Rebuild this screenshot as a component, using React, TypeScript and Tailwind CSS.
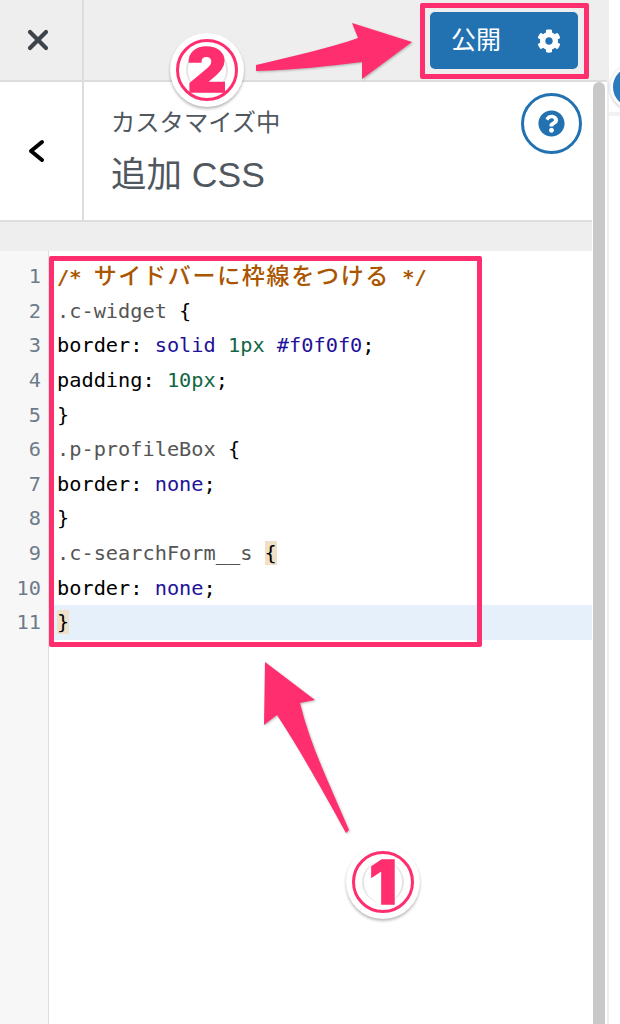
import React from 'react';
import { FaCog, FaQuestionCircle } from 'react-icons/fa';

const PINK = '#ff2e6e';

type Token = { t: string; c?: string };

const lines: Token[][] = [
  [{ t: '/* ', c: 'text-[#aa5500] font-bold' }, { t: 'サイドバーに枠線をつける', c: 'text-[#aa5500] text-[23px] font-medium tracking-[1.7px]' }, { t: ' */', c: 'text-[#aa5500] font-bold' }],
  [{ t: '.c-widget', c: 'text-[#555555]' }, { t: ' {' }],
  [{ t: 'border: ' }, { t: 'solid', c: 'text-[#221199]' }, { t: ' ' }, { t: '1px', c: 'text-[#116644]' }, { t: ' ' }, { t: '#f0f0f0', c: 'text-[#221199]' }, { t: ';' }],
  [{ t: 'padding: ' }, { t: '10px', c: 'text-[#116644]' }, { t: ';' }],
  [{ t: '}' }],
  [{ t: '.p-profileBox', c: 'text-[#555555]' }, { t: ' {' }],
  [{ t: 'border: ' }, { t: 'none', c: 'text-[#221199]' }, { t: ';' }],
  [{ t: '}' }],
  [{ t: '.c-searchForm__s', c: 'text-[#555555]' }, { t: ' ' }, { t: '{', c: 'bg-[#f0e0c8]' }],
  [{ t: 'border: ' }, { t: 'none', c: 'text-[#221199]' }, { t: ';' }],
  [{ t: '}', c: 'bg-[#f0e0c8]' }],
];

function Badge({ n, className }: { n: string; className: string }) {
  return (
    <div className={`absolute flex h-[74px] w-[74px] items-center justify-center rounded-full bg-white shadow-[0_2px_3px_rgba(0,0,0,0.28)] ${className}`}>
      <div className="relative flex h-[62px] w-[62px] items-center justify-center rounded-full border-[3px] border-[#ff2e6e] font-['Inter',sans-serif] text-[61px] leading-none font-black text-[#ff2e6e]">
        <div className="absolute left-[7px] top-[7px] h-[42px] w-[42px] rounded-full border-x-2 border-x-[#e4e4e4] border-y-0" />
        <span className="relative [-webkit-text-stroke:1.5px_#ff2e6e]">{n}</span>
      </div>
    </div>
  );
}

export default function App() {
  return (
    <div className="relative flex h-[1024px] w-[620px] overflow-hidden bg-white font-['Liberation_Sans','Noto_Sans_CJK_JP',sans-serif]">
      <div className="flex w-[607px] flex-col">
        {/* top bar */}
        <div className="flex h-[82px] items-start border-b-2 border-[#dddddd] bg-[#eeeeee]">
          <div className="flex h-full w-[84px] items-center justify-center border-r-2 border-[#dddddd] pr-[7px]">
            <svg width="22" height="22" viewBox="0 0 22 22" fill="none" stroke="#3c434a" strokeWidth="4.2" strokeLinecap="round">
              <path d="M3 3L19 19M19 3L3 19" />
            </svg>
          </div>
          <div className="ml-auto mr-[29px] mt-[12px] flex h-[57px] w-[148px] items-center rounded-[5px] bg-[#2271b1] pl-[21px] pr-[17px] text-white">
            <span className="text-[25px] leading-none">公開</span>
            <FaCog className="ml-auto h-[24px] w-[24px]" />
          </div>
        </div>

        <div className="flex min-h-0 flex-1">
          <div className="flex w-[592px] flex-col">
            {/* section header */}
            <div className="flex h-[140px] border-b-2 border-[#dddddd]">
              <div className="flex w-[84px] items-center justify-center border-r-2 border-[#dddddd] pr-[8px]">
                <svg width="20" height="30" viewBox="0 0 20 30" fill="none" stroke="#000000" strokeWidth="4" strokeLinecap="round" strokeLinejoin="round">
                  <path d="M15 6L4 15L15 24" />
                </svg>
              </div>
              <div className="flex-1 pl-[27px] pt-[24px] text-[#50575e]">
                <div className="text-[24.3px] leading-[34px]">カスタマイズ中</div>
                <div className="mt-[13px] text-[35.5px] leading-[44px]">追加 CSS</div>
              </div>
              <div className="mr-[10px] mt-[11px] flex h-[61px] w-[61px] items-center justify-center rounded-full border-[3px] border-[#2271b1]">
                <FaQuestionCircle className="h-[27px] w-[27px] text-[#2271b1]" />
              </div>
            </div>
            <div className="h-[29px] bg-[#eeeeee]" />

            {/* code editor */}
            <div className="flex min-h-0 flex-1 font-['DejaVu_Sans_Mono','Noto_Sans_CJK_JP',monospace] text-[20.3px] leading-[34.65px] whitespace-pre">
              <div className="w-[49px] border-r border-[#dddddd] bg-[#f7f7f7] pt-[8px] pr-[7px] text-right text-[#6d7b8a]">
                {lines.map((_, i) => (
                  <div key={i} className="h-[34.65px]">{i + 1}</div>
                ))}
              </div>
              <div className="flex-1 pt-[8px] text-black">
                {lines.map((line, i) => (
                  <div key={i} className={`h-[34.65px] pl-[8px] ${i === 10 ? 'bg-[#e6f0fb]' : ''}`}>
                    {line.map((tok, j) => (
                      <span key={j} className={tok.c}>{tok.t}</span>
                    ))}
                  </div>
                ))}
              </div>
            </div>
          </div>
          {/* scrollbar */}
          <div className="w-[15px] bg-white pl-[1px]">
            <div className="h-full w-[12px] rounded-t-[6px] bg-[#c8c8c8]" />
          </div>
        </div>
      </div>
      <div className="w-[13px] border-l-2 border-[#eeeeee] bg-white">
        <div className="h-[116px] border-b-4 border-[#f2f2f2]" />
      </div>

      {/* blue handle at the window edge */}
      <div className="absolute left-[610px] top-[64px] h-[46px] w-[46px] rounded-full border-[3px] border-white bg-[#2b7bbd] shadow-[0_1px_3px_rgba(0,0,0,0.25)]" />

      {/* annotations */}
      <div className="absolute left-[420px] top-[3px] h-[76px] w-[169px] rounded-[2px] border-[5px] border-[#ff2e6e]" />
      <div className="absolute left-[49px] top-[256px] h-[391px] w-[433px] rounded-[2px] border-[5px] border-[#ff2e6e]" />
      <svg className="absolute left-0 top-0" width="620" height="1024" viewBox="0 0 620 1024" style={{ filter: 'drop-shadow(1px 1px 1px rgba(0,0,0,0.25))' }}>
        <path fill={PINK} d="M412 42L352 23L358 38C330 48 290 57 256 65L256 71C295 70 330 66 362 62L362 79Z" />
        <path fill={PINK} d="M265 662L315 700L300 703C310 745 330 785 349 830L346 833C325 795 300 750 277 715L264 725Z" />
      </svg>
      <Badge n="2" className="left-[170px] top-[33px]" />
      <Badge n="1" className="left-[346px] top-[845px]" />
    </div>
  );
}
